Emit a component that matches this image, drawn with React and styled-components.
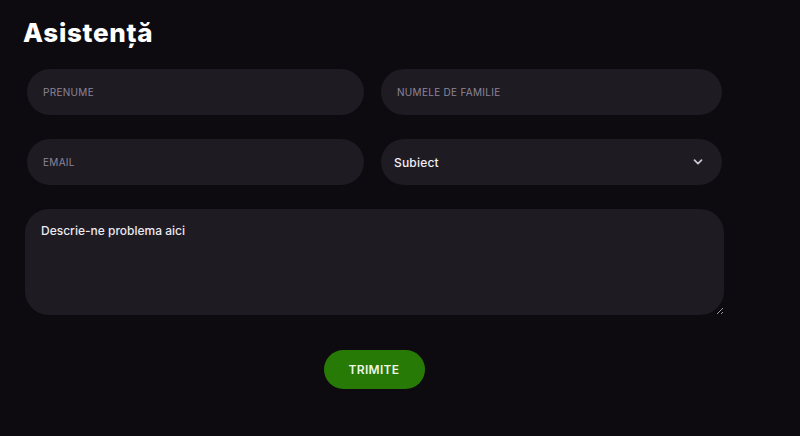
import React from "react";
import styled, { createGlobalStyle } from "styled-components";

const GlobalStyle = createGlobalStyle`
  html, body {
    margin: 0;
    padding: 0;
    background: #0e0b10;
    font-family: "Inter", "Noto Sans", sans-serif;
  }
`;

const Page = styled.main`
  padding: 16px 23px 40px;
  width: 800px;
  box-sizing: border-box;
`;

const Title = styled.h1`
  margin: 0 0 19px;
  font-size: 26px;
  font-weight: 800;
  color: #ffffff;
  letter-spacing: 0.7px;
  line-height: 34px;
`;

const Form = styled.form`
  width: 702px;
  display: flex;
  flex-direction: column;
`;

const Row = styled.div`
  display: grid;
  grid-template-columns: 337px 341px;
  column-gap: 17px;
  padding-left: 4px;
  margin-bottom: 24px;
`;

const Field = styled.input`
  height: 46px;
  box-sizing: border-box;
  border: none;
  border-radius: 23px;
  background: #1e1b23;
  padding: 0 16px;
  color: #e9e6ee;
  font-family: inherit;
  font-size: 10px;
  outline: none;

  &::placeholder {
    color: #8c8598;
    text-transform: uppercase;
    letter-spacing: 0.3px;
  }
`;

const SelectWrap = styled.div`
  position: relative;
`;

const Select = styled.select`
  width: 100%;
  height: 46px;
  box-sizing: border-box;
  appearance: none;
  border: none;
  border-radius: 23px;
  background: #1e1b23;
  padding: 0 13px;
  color: #f1eff4;
  font-family: inherit;
  font-size: 12px;
  font-weight: 500;
  letter-spacing: 0.2px;
  outline: none;
`;

const Chevron = styled.svg`
  position: absolute;
  right: 19px;
  top: 18px;
  pointer-events: none;
`;

const Message = styled.textarea`
  width: 699px;
  height: 106px;
  box-sizing: border-box;
  margin-left: 2px;
  border: none;
  border-radius: 24px;
  background: #1e1b23;
  padding: 14px 16px;
  color: #f1eff4;
  font-family: inherit;
  font-size: 12px;
  font-weight: 500;
  resize: both;
  outline: none;

  &::placeholder {
    color: #ece9f0;
  }
`;

const Actions = styled.div`
  display: flex;
  justify-content: center;
  padding-top: 35px;
`;

const Submit = styled.button`
  width: 101px;
  height: 39px;
  border: none;
  border-radius: 20px;
  background: #277a06;
  color: #eef6e6;
  font-family: inherit;
  font-size: 12px;
  font-weight: 600;
  letter-spacing: 0.3px;
  cursor: pointer;
`;

export default function App() {
  return (
    <>
      <GlobalStyle />
      <Page>
        <Title>Asistență</Title>
        <Form onSubmit={(e) => e.preventDefault()}>
          <Row>
            <Field placeholder="Prenume" />
            <Field placeholder="Numele de familie" />
          </Row>
          <Row>
            <Field placeholder="Email" type="email" />
            <SelectWrap>
              <Select defaultValue="">
                <option value="">Subiect</option>
                <option value="cont">Cont</option>
                <option value="plata">Plată</option>
              </Select>
              <Chevron width="10" height="10" viewBox="0 0 10 10">
                <path d="M1.5 3.2 L5 6.6 L8.5 3.2" fill="none" stroke="#c9c4d2" strokeWidth="1.8" strokeLinecap="round" strokeLinejoin="round" />
              </Chevron>
            </SelectWrap>
          </Row>
          <Message placeholder="Descrie-ne problema aici" />
          <Actions>
            <Submit type="submit">TRIMITE</Submit>
          </Actions>
        </Form>
      </Page>
    </>
  );
}
